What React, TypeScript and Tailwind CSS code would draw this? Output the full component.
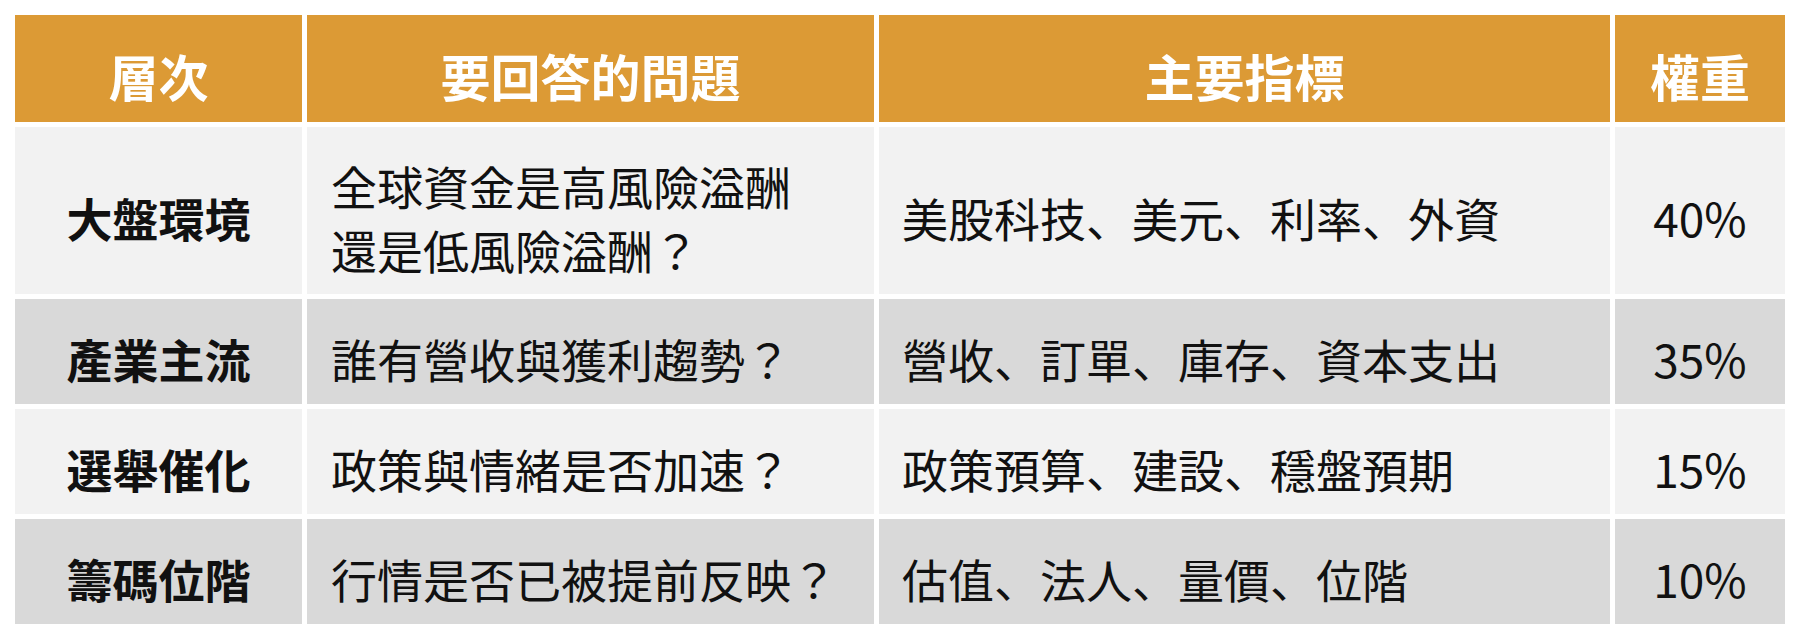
import React from 'react';

interface Row {
  layer: string;
  question: string[];
  indicators: string;
  weight: string;
}

// Four layers of the market framework
const ROWS: Row[] = [
  {
    layer: '大盤環境',
    question: ['全球資金是高風險溢酬', '還是低風險溢酬？'],
    indicators: '美股科技、美元、利率、外資',
    weight: '40%',
  },
  {
    layer: '產業主流',
    question: ['誰有營收與獲利趨勢？'],
    indicators: '營收、訂單、庫存、資本支出',
    weight: '35%',
  },
  {
    layer: '選舉催化',
    question: ['政策與情緒是否加速？'],
    indicators: '政策預算、建設、穩盤預期',
    weight: '15%',
  },
  {
    layer: '籌碼位階',
    question: ['行情是否已被提前反映？'],
    indicators: '估值、法人、量價、位階',
    weight: '10%',
  },
];

const HEADERS = ['層次', '要回答的問題', '主要指標', '權重'];

const App: React.FC = () => {
  return (
    <div
      className="w-[1800px] h-[638px] bg-white p-[15px]"
      style={{ fontFamily: '"Noto Sans CJK JP", "Noto Sans", sans-serif' }}
    >
      <div className="grid grid-cols-[287px_567px_731px_170px] grid-rows-[107px_167px_105px_105px_105px] gap-[5px]">
        {/* Header */}
        {HEADERS.map((h) => (
          <div
            key={h}
            className="bg-[#dc9a35] flex items-center justify-center pt-[12px] text-[50px] font-bold text-white leading-none"
          >
            {h}
          </div>
        ))}

        {/* Body rows */}
        {ROWS.map((row, i) => {
          const bg = i % 2 === 0 ? 'bg-[#f2f2f2]' : 'bg-[#d9d9d9]';
          return (
            <React.Fragment key={row.layer}>
              <div className={`${bg} flex items-center justify-center pt-[12px] text-[46px] font-bold text-[#111] leading-none`}>
                {row.layer}
              </div>
              <div className={`${bg} flex flex-col justify-center pl-[24px] pt-[12px] text-[46px] text-[#111] leading-[64px]`}>
                {row.question.map((q) => (
                  <span key={q}>{q}</span>
                ))}
              </div>
              <div className={`${bg} flex items-center pl-[23px] pt-[12px] text-[46px] text-[#111] leading-none`}>
                {row.indicators}
              </div>
              <div className={`${bg} flex items-center justify-center pt-[12px] text-[46px] text-[#111] leading-none`}>
                {row.weight}
              </div>
            </React.Fragment>
          );
        })}
      </div>
    </div>
  );
};

export default App;
